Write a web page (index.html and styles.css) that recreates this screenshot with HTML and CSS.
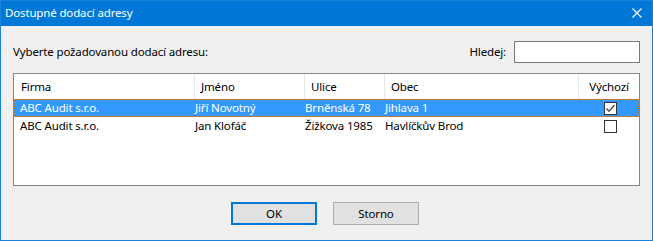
FILE: index.html
```html
<!DOCTYPE html>
<html lang="cs">
<head>
<meta charset="utf-8">
<title>Dostupné dodací adresy</title>
<link rel="stylesheet" href="styles.css">
</head>
<body>
<div class="window">
  <div class="titlebar">
    <span class="title">Dostupné dodací adresy</span>
    <svg class="close" width="10" height="10" viewBox="0 0 10 10"><path d="M0.5 0.5 L9.5 9.5 M9.5 0.5 L0.5 9.5" stroke="#fff" stroke-width="1.1" fill="none"/></svg>
  </div>
  <div class="content">
    <div class="search-row">
      <span class="label">Vyberte požadovanou dodací adresu:</span>
      <div class="search">
        <span class="label">Hledej:</span>
        <div class="input"></div>
      </div>
    </div>
    <div class="list">
      <div class="grid header">
        <div class="hc first">Firma</div>
        <div class="hc sep">Jméno</div>
        <div class="hc sep">Ulice</div>
        <div class="hc sep">Obec</div>
        <div class="hc center">Výchozí</div>
      </div>
      <div class="grid row selected">
        <div class="c first">ABC Audit s.r.o.</div>
        <div class="c">Jiří Novotný</div>
        <div class="c">Brněnská 78</div>
        <div class="c">Jihlava 1</div>
        <div class="c center"><span class="check"><svg width="11" height="11" viewBox="0 0 11 11"><path d="M1.5 5.5 L4 8.2 L9.3 2.2" stroke="#4a4a4a" stroke-width="1.4" fill="none"/></svg></span></div>
      </div>
      <div class="grid row">
        <div class="c first">ABC Audit s.r.o.</div>
        <div class="c">Jan Klofáč</div>
        <div class="c">Žižkova 1985</div>
        <div class="c">Havlíčkův Brod</div>
        <div class="c center"><span class="check"></span></div>
      </div>
    </div>
    <div class="buttons">
      <div class="btn default">OK</div>
      <div class="btn">Storno</div>
    </div>
  </div>
</div>
</body>
</html>
```
FILE: styles.css
```css
html, body {
  margin: 0;
  padding: 0;
}
body {
  font-family: "Noto Sans", "Open Sans", sans-serif;
  font-size: 11.5px;
  letter-spacing: -0.15px;
  color: #000;
  background: #f0f0f0;
}
.window {
  width: 653px;
  height: 241px;
  box-sizing: border-box;
  border: 1px solid #1a82d9;
  background: #f0f0f0;
  display: flex;
  flex-direction: column;
}
.titlebar {
  height: 25px;
  background: #0078d7;
  color: #fff;
  display: flex;
  align-items: center;
  justify-content: space-between;
  padding: 0 10px 0 4px;
}
.title {
  line-height: 16px;
  margin-top: -1px;
}
.close {
  display: block;
  margin-top: -1px;
}
.content {
  padding: 15px 12px 0 12px;
  display: flex;
  flex-direction: column;
}
.search-row {
  height: 22px;
  display: flex;
  align-items: center;
  justify-content: space-between;
}
.label {
  line-height: 16px;
}
.search {
  display: flex;
  align-items: center;
  gap: 8px;
}
.input {
  width: 124px;
  height: 20px;
  border: 1px solid #7a7a7a;
  background: #fff;
}
.list {
  margin-top: 10px;
  height: 113px;
  box-sizing: border-box;
  border: 1px solid #828790;
  background: #fff;
}
.grid {
  display: grid;
  grid-template-columns: 181px 110px 80px 194px 60px;
}
.header {
  height: 25px;
}
.hc {
  padding-left: 6px;
  line-height: 25px;
  border-right: 1px solid #e5e5e5;
  white-space: nowrap;
}
.hc.first {
  padding-left: 7px;
}
.hc.center {
  border-right: none;
  padding-left: 0;
  text-align: center;
}
.row {
  height: 18px;
  box-sizing: border-box;
}
.c {
  line-height: 18px;
  white-space: nowrap;
}
.c.first {
  padding-left: 6px;
}
.c.center {
  display: flex;
  align-items: center;
  justify-content: center;
  padding-left: 3px;
}
.row.selected {
  color: #fff;
  background:
    repeating-linear-gradient(90deg, #c8782f 0 1px, transparent 1px 2px) left top / 100% 1px no-repeat,
    repeating-linear-gradient(90deg, #c8782f 0 1px, transparent 1px 2px) left bottom / 100% 1px no-repeat,
    repeating-linear-gradient(0deg, #c8782f 0 1px, transparent 1px 2px) left top / 1px 100% no-repeat,
    repeating-linear-gradient(0deg, #c8782f 0 1px, transparent 1px 2px) right top / 1px 100% no-repeat,
    #3399ff;
}
.check {
  display: flex;
  align-items: center;
  justify-content: center;
  width: 11px;
  height: 11px;
  border: 1px solid #333;
  background: #fff;
}
.check svg {
  display: block;
}
.buttons {
  margin-top: 16px;
  display: flex;
  justify-content: center;
  gap: 16px;
  padding-right: 3px;
}
.btn {
  width: 84px;
  height: 21px;
  border: 1px solid #adadad;
  background: #e1e1e1;
  text-align: center;
  line-height: 21px;
}
.btn.default {
  width: 82px;
  height: 19px;
  border: 2px solid #0078d7;
  line-height: 19px;
}
```
